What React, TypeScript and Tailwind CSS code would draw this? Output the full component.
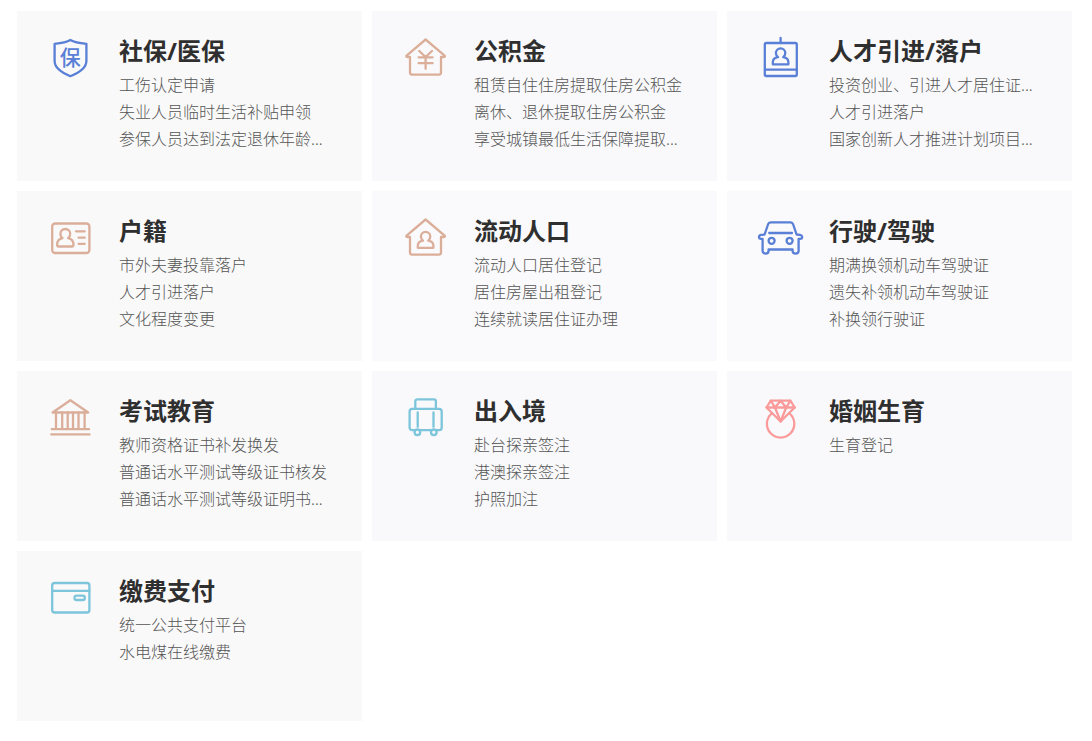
import { ReactNode } from "react";

interface Service {
    title: string;
    color: string;
    bg: string;
    icon: ReactNode;
    items: string[];
}

const PERSON = "M22 23.2c-1.4-.9-2.1-2.3-2.1-4.1a4.7 4.7 0 0 1 9.4 0c0 1.800-.7 3.200-2.100 4.100 3.300.5 5.200 2.400 5.200 5.300v1.800H16.800v-1.800c0-2.900 1.900-4.800 5.200-5.300z";
const HOUSE = "M24.6 5.5 5.6 21.6c-.6.7-.3 1.4.6 1.4H9v15.6a2 2 0 0 0 2 2h27a2 2 0 0 0 2-2V23h3c.9 0 1.2-.7.6-1.4z";

const shield = (
    <>
        <path d="M24.4 6C20 8.6 15 9.2 8.6 9.9V27c0 7.4 7.4 11.800 15.8 15.2C32.8 38.8 40.4 34.4 40.4 27V9.9C34 9.2 28.8 8.6 24.4 6z" />
        <text x="24.3" y="31" textAnchor="middle" fontSize="21" fill="currentColor" stroke="none" className="font-medium">保</text>
    </>
);

const fund = (
    <>
        <path d={HOUSE} />
        <path d="m18.2 17 6.4 6 6.4-6M17.6 23.3h14M17.6 29.2h14M24.6 23.3v11.5" />
    </>
);

const badge = (
    <>
        <rect x="8.8" y="9" width="32" height="33" rx="1.5" />
        <path d="M24.6 4v5M9 35.7h31.5" />
        <path d={PERSON} />
    </>
);

const idCard = (
    <>
        <rect x="6.2" y="9.5" width="37.2" height="29.5" rx="3" />
        <path d="M16.5 24.100c-1.400-1-2.100-2.500-2.100-4.200a4.900 4.900 0 0 1 9.800 0c0 1.700-.7 3.200-2.100 4.200 3.500.7 5.400 3.200 5.400 6.700 0 1-.6 1.700-1.600 1.700H12.700c-1 0-1.600-.7-1.600-1.700 0-3.500 1.900-6 5.400-6.700z" />
        <path d="M30 17.300h8.700M32.600 23.700h6.100M32.600 29.800h6.100" />
    </>
);

const resident = (
    <>
        <path d={HOUSE} />
        <path d={PERSON} transform="translate(0 3.5)" />
    </>
);

const car = (
    <>
        <path d="M8.6 20.5 12 10.5c.5-1.5 1.5-2.2 3-2.2h19.2c1.5 0 2.5.7 3 2.2l3.4 10 3.4.3c2.7.4 3 3.6.4 4.1H42.600V37c0 3.400-6 3.400-6 0v-1.500h-24V37c0 3.400-6 3.400-6 0V24.900H4.800c-2.600-.5-2.300-3.700.4-4.100z" />
        <path d="M13.2 19h22.8" />
        <circle cx="15.6" cy="26.8" r="3" />
        <circle cx="33.6" cy="26.8" r="3" />
    </>
);

const school = (
    <>
        <path d="M24.4 6.2 6.6 18.5h35.6z" />
        <path d="M10 18.5V35M16.2 18.5V35M21.7 18.5V35M27 18.5V35M32.5 18.5V35M38.6 18.5V35M5.8 35.2h37.2M5.3 40.4h38.2" />
    </>
);

const luggage = (
    <>
        <path d="M14.3 14.7V7.3a2 2 0 0 1 2-2h16.6a2 2 0 0 1 2 2v7.4" />
        <path d="M13.3 36.2h-2a2.7 2.7 0 0 1-2.7-2.7v-16a2.7 2.7 0 0 1 2.7-2.7H38a2.7 2.7 0 0 1 2.7 2.7v16a2.7 2.7 0 0 1-2.7 2.7h-2M19.5 36.2h10" />
        <path d="M16.7 18.5v14.3M32.5 18.5v14.3" />
        <circle cx="16.4" cy="38.3" r="2.8" />
        <circle cx="32.8" cy="38.3" r="2.8" />
    </>
);

const ring = (
    <>
        <path d="M14.8 6.7h19.6l4.3 6.8-14.1 14-14.1-14z" />
        <path d="M10.5 13.5h28.2M19 13.5l5.6 14 5.6-14M14.8 6.7l4.2 6.8 5.6-6.8 5.6 6.8 4.2-6.8" />
        <path d="M15.6 19.5a13.7 13.7 0 1 0 18 0" />
    </>
);

const wallet = (
    <>
        <rect x="6.2" y="9" width="37.2" height="29.5" rx="2.5" />
        <path d="M6.2 16.8h37.2" />
        <rect x="28.5" y="21.7" width="10.3" height="4.3" rx="2.1" />
    </>
);

const services: Service[] = [
    { title: "社保/医保", color: "text-[#5a7fd6]", bg: "bg-[#f9f9f9]", icon: shield, items: ["工伤认定申请", "失业人员临时生活补贴申领", "参保人员达到法定退休年龄..."] },
    { title: "公积金", color: "text-[#dbae9a]", bg: "bg-[#f9f9fb]", icon: fund, items: ["租赁自住住房提取住房公积金", "离休、退休提取住房公积金", "享受城镇最低生活保障提取..."] },
    { title: "人才引进/落户", color: "text-[#5a7fd6]", bg: "bg-[#f9f9fb]", icon: badge, items: ["投资创业、引进人才居住证...", "人才引进落户", "国家创新人才推进计划项目..."] },
    { title: "户籍", color: "text-[#dbae9a]", bg: "bg-[#f9f9f9]", icon: idCard, items: ["市外夫妻投靠落户", "人才引进落户", "文化程度变更"] },
    { title: "流动人口", color: "text-[#dbae9a]", bg: "bg-[#faf9fb]", icon: resident, items: ["流动人口居住登记", "居住房屋出租登记", "连续就读居住证办理"] },
    { title: "行驶/驾驶", color: "text-[#5a7fd6]", bg: "bg-[#faf9fb]", icon: car, items: ["期满换领机动车驾驶证", "遗失补领机动车驾驶证", "补换领行驶证"] },
    { title: "考试教育", color: "text-[#dbae9a]", bg: "bg-[#f9f9f9]", icon: school, items: ["教师资格证书补发换发", "普通话水平测试等级证书核发", "普通话水平测试等级证明书..."] },
    { title: "出入境", color: "text-[#7cc5db]", bg: "bg-[#f9f9fb]", icon: luggage, items: ["赴台探亲签注", "港澳探亲签注", "护照加注"] },
    { title: "婚姻生育", color: "text-[#fa9a9a]", bg: "bg-[#f9f9fb]", icon: ring, items: ["生育登记"] },
    { title: "缴费支付", color: "text-[#7cc5db]", bg: "bg-[#faf9fa]", icon: wallet, items: ["统一公共支付平台", "水电煤在线缴费"] },
];

function ServiceCard({ title, color, bg, icon, items }: Service) {
    return (
        <section className={`flex min-h-[170px] gap-[25px] pl-[29px] pr-4 pt-5 ${bg}`}>
            <svg viewBox="0 0 48 48" className={`mt-[3px] size-12 shrink-0 ${color}`} fill="none" stroke="currentColor" strokeWidth="2.3" strokeLinecap="round" strokeLinejoin="round" aria-hidden="true">
                {icon}
            </svg>
            <div className="min-w-0">
                <h2 className="mb-px text-2xl leading-10 font-bold text-[#2f2f2f]">{title}</h2>
                <ul>
                    {items.map((item) => (
                        <li key={item} className="truncate text-base leading-[27px] font-light text-[#555]">
                            <a href="#">{item}</a>
                        </li>
                    ))}
                </ul>
            </div>
        </section>
    );
}

export default function App() {
    return (
        <main className="min-h-screen bg-white pt-[11px] pr-5 pb-5 pl-[17px] font-['Noto_Sans','Noto_Sans_CJK_SC',sans-serif]">
            <div className="grid grid-cols-3 gap-2.5">
                {services.map((service) => (
                    <ServiceCard key={service.title} {...service} />
                ))}
            </div>
        </main>
    );
}
